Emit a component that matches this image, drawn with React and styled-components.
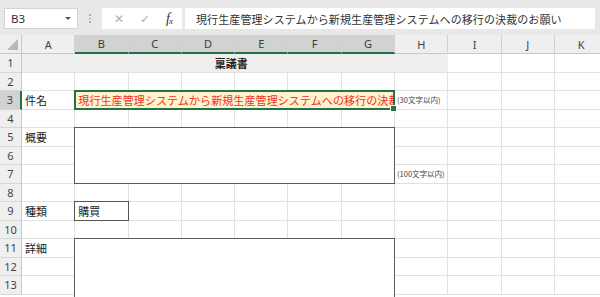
import React from "react";
import styled, { createGlobalStyle, css } from "styled-components";

const GlobalStyle = createGlobalStyle`
  html, body {
    margin: 0;
    padding: 0;
    background: #ffffff;
    overflow: hidden;
  }
  body {
    font-family: "Noto Sans CJK JP", "Noto Sans", sans-serif;
  }
`;

const COLS = ["A", "B", "C", "D", "E", "F", "G", "H", "I", "J", "K"];
const ROW_COUNT = 13;
const FORMULA =
  "現行生産管理システムから新規生産管理システムへの移行の決裁のお願い";

// merged ranges: col index (0 = A), rows 1-based
const merges = [
  { key: "title", c1: 0, c2: 7, r1: 1, r2: 1, kind: "title", text: "稟議書" },
  { key: "subject", c1: 1, c2: 6, r1: 3, r2: 3, kind: "selected", text: FORMULA },
  { key: "summary", c1: 1, c2: 6, r1: 5, r2: 7, kind: "box" },
  { key: "detail", c1: 1, c2: 6, r1: 11, r2: 13, kind: "openBox" },
];

const values = {
  "0-3": { text: "件名" },
  "7-3": { text: "(30文字以内)", small: true },
  "0-5": { text: "概要" },
  "7-7": { text: "(100文字以内)", small: true },
  "0-9": { text: "種類" },
  "1-9": { text: "購買", boxed: true },
  "0-11": { text: "詳細" },
};

const isCovered = (c, r) =>
  merges.some((m) => c >= m.c1 && c <= m.c2 && r >= m.r1 && r <= m.r2);

const Screen = styled.div`
  width: 600px;
  height: 297px;
  overflow: hidden;
  background: #ffffff;
  display: flex;
  flex-direction: column;
`;

const FormulaBar = styled.div`
  height: 35px;
  flex: none;
  background: #e8e8e8;
  display: flex;
  align-items: flex-start;
  padding: 8px 0 0 4px;
  box-sizing: border-box;
`;

const NameBox = styled.div`
  width: 74px;
  height: 21px;
  background: #fff;
  border: 1px solid #d4d4d4;
  box-sizing: border-box;
  display: flex;
  align-items: center;
  justify-content: space-between;
  padding: 0 6px;
  font-family: "Noto Sans", "Open Sans", sans-serif;
  font-size: 11.5px;
  color: #333;
`;

const Caret = styled.span`
  width: 0;
  height: 0;
  border-left: 3px solid transparent;
  border-right: 3px solid transparent;
  border-top: 3px solid #555;
`;

const Dots = styled.div`
  width: 24px;
  height: 21px;
  display: flex;
  flex-direction: column;
  align-items: center;
  justify-content: center;
  gap: 2px;
  span {
    width: 1.5px;
    height: 1.5px;
    background: #a0a0a0;
    border-radius: 50%;
  }
`;

const FxGroup = styled.div`
  width: 80px;
  height: 21px;
  background: #fff;
  display: flex;
  align-items: center;
  justify-content: space-around;
  padding: 0 2px 0 4px;
  box-sizing: border-box;
  font-family: "DejaVu Sans", sans-serif;
  font-size: 12px;
  color: #b0b0b0;
`;

const FxIcon = styled.span`
  font-family: "Liberation Serif", serif;
  font-style: italic;
  font-size: 14px;
  color: #333;
  letter-spacing: -1px;
  sub {
    font-size: 9px;
    vertical-align: -1px;
  }
`;

const FormulaInput = styled.div`
  margin-left: 3px;
  width: 410px;
  height: 21px;
  background: #fff;
  display: flex;
  align-items: center;
  padding-left: 11px;
  box-sizing: border-box;
  font-size: 11px;
  letter-spacing: 0.1px;
  color: #333;
  white-space: nowrap;
  overflow: hidden;
`;

const Sheet = styled.div`
  display: grid;
  grid-template-columns: 22px repeat(11, 53.3px);
  grid-template-rows: 19px repeat(${ROW_COUNT}, 18.5px);
  font-size: 11px;
  color: #222;
`;

const Corner = styled.div`
  grid-column: 1;
  grid-row: 1;
  background: #efefef;
  border-right: 1px solid #c8c8c8;
  border-bottom: 1px solid #c8c8c8;
  box-sizing: border-box;
  position: relative;
  &::after {
    content: "";
    position: absolute;
    right: 3px;
    bottom: 3px;
    width: 0;
    height: 0;
    border-left: 11px solid transparent;
    border-bottom: 11px solid #b7b7b7;
  }
`;

const ColHeader = styled.div`
  grid-row: 1;
  grid-column: ${(p) => p.$col};
  background: ${(p) => (p.$active ? "#d2d2d2" : "#efefef")};
  border-right: 1px solid #d0d0d0;
  border-bottom: ${(p) => (p.$active ? "2px solid #217346" : "1px solid #c8c8c8")};
  box-sizing: border-box;
  display: flex;
  align-items: center;
  justify-content: center;
  font-family: "Noto Sans", "Open Sans", sans-serif;
  font-size: 11px;
  color: ${(p) => (p.$active ? "#3a3a3a" : "#444")};
`;

const RowHeader = styled.div`
  grid-column: 1;
  grid-row: ${(p) => p.$row};
  background: ${(p) => (p.$active ? "#d2d2d2" : "#efefef")};
  border-right: ${(p) => (p.$active ? "2px solid #217346" : "1px solid #c8c8c8")};
  border-bottom: 1px solid #d6d6d6;
  box-sizing: border-box;
  display: flex;
  align-items: center;
  justify-content: center;
  font-family: "Noto Sans", "Open Sans", sans-serif;
  font-size: 11px;
  color: #444;
`;

const Cell = styled.div`
  grid-column: ${(p) => p.$col};
  grid-row: ${(p) => p.$row};
  border-right: 1px solid #e1e1e1;
  border-bottom: 1px solid #e1e1e1;
  box-sizing: border-box;
  display: flex;
  align-items: flex-end;
  padding: 0 2px 1px 3px;
  white-space: nowrap;
  ${(p) =>
    p.$small &&
    css`
      font-size: 7.5px;
      color: #444;
      align-items: center;
      padding-left: 2px;
    `}
  ${(p) =>
    p.$boxed &&
    css`
      border: 1px solid #555;
      margin: -1px 0 0 -1px;
    `}
`;

const Merged = styled.div`
  grid-column: ${(p) => p.$c1 + 2} / ${(p) => p.$c2 + 3};
  grid-row: ${(p) => p.$r1 + 1} / ${(p) => p.$r2 + 2};
  box-sizing: border-box;
  background: #fff;
  display: flex;
  white-space: nowrap;
  overflow: hidden;
  ${(p) =>
    p.$kind === "title" &&
    css`
      background: #efefef;
      border-bottom: 1px solid #e1e1e1;
      align-items: center;
      justify-content: center;
      font-weight: 700;
      font-size: 11px;
      padding-right: 8px;
    `}
  ${(p) =>
    p.$kind === "selected" &&
    css`
      background: #fff2cc;
      border: 2px solid #217346;
      margin: -1px 0 0 -1px;
      align-items: center;
      padding-left: 2px;
      color: #f2312a;
      font-size: 11px;
      letter-spacing: 0.1px;
      overflow: visible;
      position: relative;
      z-index: 2;
    `}
  ${(p) =>
    p.$kind === "box" &&
    css`
      border: 1px solid #5a5a5a;
      margin: -1px 0 0 -1px;
    `}
  ${(p) =>
    p.$kind === "openBox" &&
    css`
      border: 1px solid #5a5a5a;
      border-bottom: none;
      margin: -1px 0 -4px -1px;
    `}
`;

const ClipText = styled.span`
  display: block;
  overflow: hidden;
  width: 100%;
`;

const FillHandle = styled.span`
  position: absolute;
  right: -4px;
  bottom: -4px;
  width: 5px;
  height: 5px;
  background: #217346;
  border: 1px solid #fff;
  z-index: 3;
`;

export default function App() {
  const rows = Array.from({ length: ROW_COUNT }, (_, i) => i + 1);

  return (
    <>
      <GlobalStyle />
      <Screen>
        <FormulaBar>
          <NameBox>
            B3
            <Caret />
          </NameBox>
          <Dots>
            <span />
            <span />
            <span />
          </Dots>
          <FxGroup>
            <span>✕</span>
            <span>✓</span>
            <FxIcon>
              f<sub>x</sub>
            </FxIcon>
          </FxGroup>
          <FormulaInput>{FORMULA}</FormulaInput>
        </FormulaBar>

        <Sheet>
          <Corner />
          {COLS.map((c, i) => (
            <ColHeader key={c} $col={i + 2} $active={i >= 1 && i <= 6}>
              {c}
            </ColHeader>
          ))}
          {rows.map((r) => (
            <RowHeader key={`rh-${r}`} $row={r + 1} $active={r === 3}>
              {r}
            </RowHeader>
          ))}
          {rows.map((r) =>
            COLS.map((_, c) => {
              if (isCovered(c, r)) return null;
              const v = values[`${c}-${r}`];
              return (
                <Cell
                  key={`${c}-${r}`}
                  $col={c + 2}
                  $row={r + 1}
                  $small={v && v.small}
                  $boxed={v && v.boxed}
                >
                  {v ? v.text : null}
                </Cell>
              );
            })
          )}
          {merges.map((m) => (
            <Merged
              key={m.key}
              $c1={m.c1}
              $c2={m.c2}
              $r1={m.r1}
              $r2={m.r2}
              $kind={m.kind}
            >
              {m.kind === "selected" ? (
                <>
                  <ClipText>{m.text}</ClipText>
                  <FillHandle />
                </>
              ) : (
                m.text
              )}
            </Merged>
          ))}
        </Sheet>
      </Screen>
    </>
  );
}
